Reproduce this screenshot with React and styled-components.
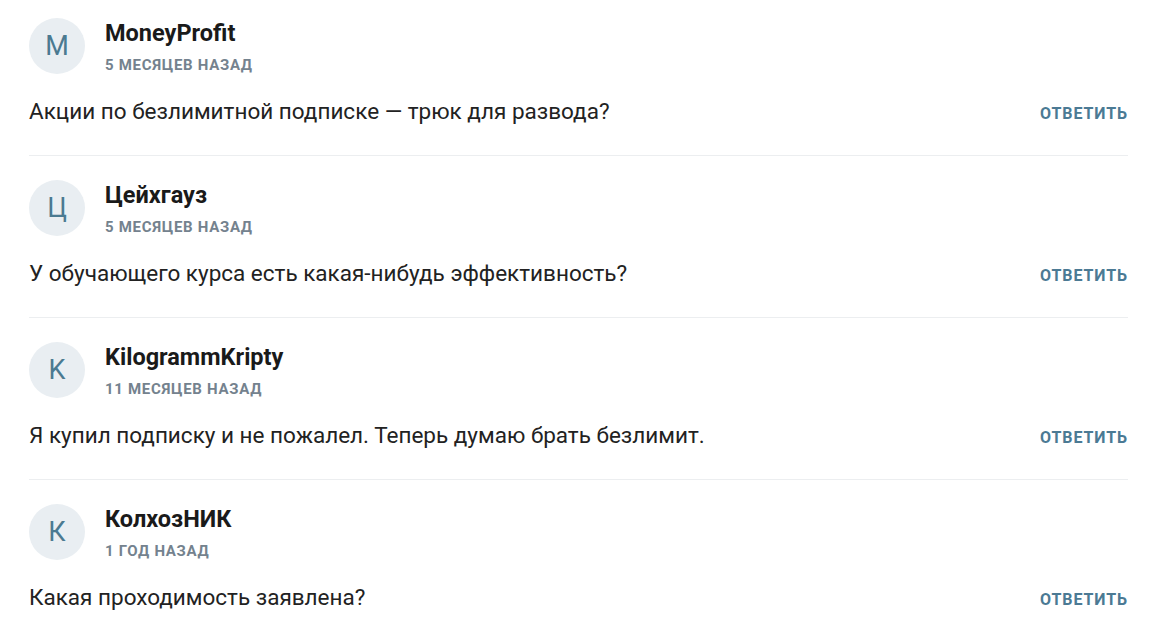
import React from 'react';
import styled, { createGlobalStyle } from 'styled-components';

const GlobalStyle = createGlobalStyle`
  body {
    margin: 0;
    background: #ffffff;
    font-family: Roboto, "Liberation Sans", Arial, sans-serif;
  }
`;

const List = styled.div`
  display: flex;
  flex-direction: column;
  padding: 0 36px 0 29px;
`;

const Item = styled.div`
  display: flex;
  flex-direction: column;
  gap: 23px;
  padding: 24px 0 30px;
  border-bottom: 1px solid #eceef0;

  &:first-child {
    padding-top: 18px;
  }
  &:last-child {
    border-bottom: none;
  }
`;

const Header = styled.div`
  display: flex;
  align-items: center;
  gap: 20px;
`;

const Avatar = styled.div`
  width: 56px;
  height: 56px;
  border-radius: 50%;
  background: #e9eef2;
  color: #4b7a91;
  font-size: 27px;
  display: flex;
  align-items: center;
  justify-content: center;
  flex-shrink: 0;
`;

const Meta = styled.div`
  display: flex;
  flex-direction: column;
  gap: 9px;
`;

const Name = styled.div`
  font-size: 23.5px;
  font-weight: 700;
  color: #1a1a1a;
  line-height: 28px;
`;

const Time = styled.div`
  font-size: 15px;
  font-weight: 700;
  color: #74828e;
  text-transform: uppercase;
  letter-spacing: 0.7px;
  line-height: 18px;
`;

const Body = styled.div`
  display: flex;
  align-items: center;
  justify-content: space-between;
`;

const Text = styled.div`
  font-size: 22.5px;
  color: #222222;
  line-height: 28px;
`;

const Reply = styled.button`
  border: none;
  background: none;
  padding: 0;
  margin-top: 4px;
  font-family: inherit;
  font-size: 16px;
  font-weight: 700;
  color: #4b7a94;
  letter-spacing: 0.9px;
  text-transform: uppercase;
  cursor: pointer;
`;

const comments = [
  { name: 'MoneyProfit', letter: 'M', time: '5 месяцев назад', text: 'Акции по безлимитной подписке — трюк для развода?' },
  { name: 'Цейхгауз', letter: 'Ц', time: '5 месяцев назад', text: 'У обучающего курса есть какая-нибудь эффективность?' },
  { name: 'KilogrammKripty', letter: 'K', time: '11 месяцев назад', text: 'Я купил подписку и не пожалел. Теперь думаю брать безлимит.' },
  { name: 'КолхозНИК', letter: 'К', time: '1 год назад', text: 'Какая проходимость заявлена?' },
];

const App = () => (
  <>
    <GlobalStyle />
    <List>
      {comments.map((c) => (
        <Item key={c.name}>
          <Header>
            <Avatar>{c.letter}</Avatar>
            <Meta>
              <Name>{c.name}</Name>
              <Time>{c.time}</Time>
            </Meta>
          </Header>
          <Body>
            <Text>{c.text}</Text>
            <Reply>Ответить</Reply>
          </Body>
        </Item>
      ))}
    </List>
  </>
);

export default App;
